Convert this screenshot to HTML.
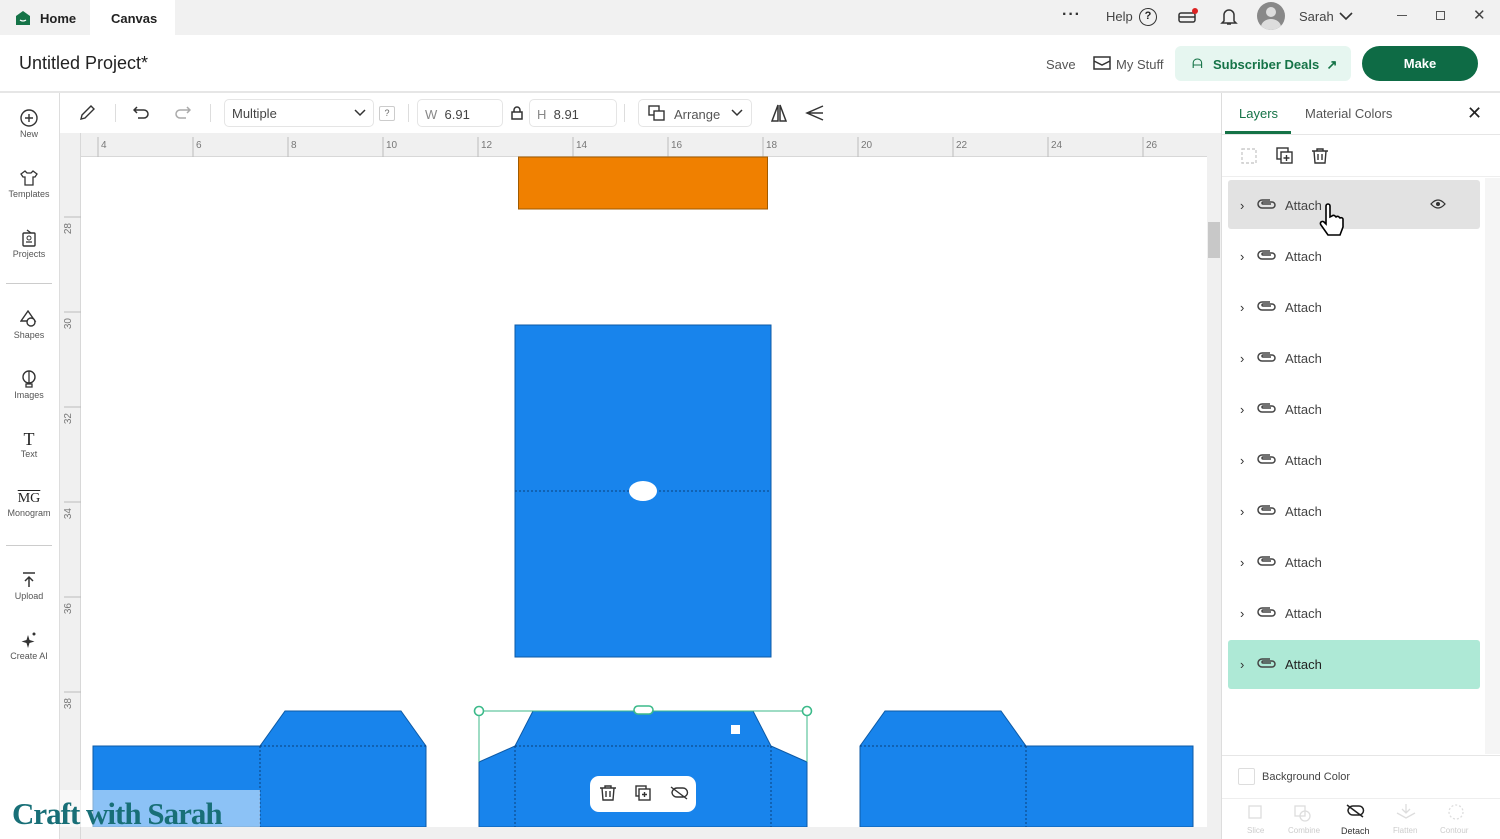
<!DOCTYPE html>
<html><head><meta charset="utf-8"><style>
*{box-sizing:border-box;margin:0;padding:0}
body{width:1500px;height:839px;overflow:hidden;font-family:"Liberation Sans",sans-serif;background:#fff;position:relative;color:#222}
.a{position:absolute}
.side div{position:absolute;left:0;width:58px;text-align:center;font-size:9px;color:#555}
.side svg{display:block;margin:0 auto 2px}
.row{position:absolute;left:1228px;width:252px;height:49px;border-radius:3px;font-size:13px;color:#444}
</style></head><body>
<!-- top bar -->
<div class="a" style="left:0;top:0;width:1500px;height:35px;background:#f1f1f1"></div>
<div class="a" style="left:90px;top:0;width:85px;height:35px;background:#fff"></div>
<svg class="a" style="left:15px;top:10px" width="16" height="16"><path d="M1 6L8 1L15 6V15H1Z" fill="#157347"/><path d="M5 10Q8 12 11 10" stroke="#fff" stroke-width="1.3" fill="none"/></svg>
<div class="a" style="left:40px;top:11px;font-size:13px;font-weight:bold;color:#222">Home</div>
<div class="a" style="left:111px;top:11px;font-size:13px;font-weight:bold;color:#222">Canvas</div>
<div class="a" style="left:1062px;top:6px;font-size:16px;letter-spacing:1px;color:#333;font-weight:bold">···</div>
<div class="a" style="left:1106px;top:9px;font-size:13px;color:#444">Help</div>
<div class="a" style="left:1139px;top:8px;width:18px;height:18px;border:1.5px solid #333;border-radius:50%;font-size:11px;text-align:center;line-height:15px;font-weight:bold">?</div>
<svg class="a" style="left:1177px;top:8px" width="22" height="18"><rect x="2" y="5" width="16" height="9" rx="2" fill="none" stroke="#333" stroke-width="1.5"/><line x1="2" y1="9" x2="18" y2="9" stroke="#333" stroke-width="1.5"/><circle cx="18" cy="3" r="3" fill="#d22"/></svg>
<svg class="a" style="left:1220px;top:7px" width="18" height="20"><path d="M4 14V8a5 5 0 0 1 10 0v6l2 2H2z M7 17h4" fill="none" stroke="#333" stroke-width="1.5"/></svg>
<div class="a" style="left:1257px;top:2px;width:28px;height:28px;border-radius:50%;background:#888;overflow:hidden"><div class="a" style="left:9px;top:5px;width:10px;height:10px;border-radius:50%;background:#ddd"></div><div class="a" style="left:4px;top:17px;width:20px;height:16px;border-radius:50%;background:#ddd"></div></div>
<div class="a" style="left:1299px;top:9px;font-size:13px;color:#444">Sarah</div>
<svg class="a" style="left:1339px;top:11px" width="14" height="10"><path d="M1 2l6 6 6-6" stroke="#333" stroke-width="1.6" fill="none"/></svg>
<div class="a" style="left:1397px;top:15px;width:10px;height:1px;background:#555"></div>
<div class="a" style="left:1436px;top:11px;width:9px;height:9px;border:1px solid #555"></div>
<div class="a" style="left:1473px;top:6px;font-size:15px;color:#444">✕</div>
<!-- header -->
<div class="a" style="left:0;top:91px;width:1500px;height:2px;background:#e6e6e6"></div>
<div class="a" style="left:19px;top:53px;font-size:18px;color:#222">Untitled Project*</div>
<div class="a" style="left:1046px;top:57px;font-size:13px;color:#555">Save</div>
<svg class="a" style="left:1093px;top:55px" width="18" height="16"><path d="M1 2h16v12H1z M1 6l8 4 8-4" fill="none" stroke="#333" stroke-width="1.5"/></svg>
<div class="a" style="left:1116px;top:57px;font-size:13px;color:#555">My Stuff</div>
<div class="a" style="left:1175px;top:46px;width:176px;height:35px;background:#e6f6f0;border-radius:6px"></div>
<div class="a" style="left:1192px;top:56px;font-size:13px;color:#157347">ᗩ</div>
<div class="a" style="left:1213px;top:57px;font-size:13px;font-weight:bold;color:#157347">Subscriber Deals &nbsp;↗</div>
<div class="a" style="left:1362px;top:46px;width:116px;height:35px;background:#0e6b45;border-radius:18px;color:#fff;font-weight:bold;font-size:13px;text-align:center;line-height:35px">Make</div>
<!-- left sidebar -->
<div class="a" style="left:59px;top:93px;width:1px;height:746px;background:#ddd"></div>
<div class="side">
<div style="top:109px"><svg width="18" height="18"><circle cx="9" cy="9" r="8" fill="none" stroke="#333" stroke-width="1.4"/><path d="M9 5v8M5 9h8" stroke="#333" stroke-width="1.4"/></svg>New</div>
<div style="top:169px"><svg width="18" height="18"><path d="M5 2L1 5l2 3h2v8h8V8h2l2-3-4-3-2 2H7z" fill="none" stroke="#333" stroke-width="1.3"/></svg>Templates</div>
<div style="top:229px"><svg width="18" height="18"><rect x="3" y="4" width="12" height="13" rx="1" fill="none" stroke="#333" stroke-width="1.4"/><circle cx="9" cy="9" r="2" fill="none" stroke="#333"/><path d="M6 13h6M7 1l4 3" stroke="#333" stroke-width="1.3"/></svg>Projects</div>
<div style="top:310px"><svg width="18" height="18"><path d="M8 1L1 11h14z" fill="none" stroke="#333" stroke-width="1.4"/><circle cx="11" cy="12" r="4" fill="#fff" stroke="#333" stroke-width="1.4"/></svg>Shapes</div>
<div style="top:370px"><svg width="18" height="18"><ellipse cx="9" cy="7" rx="6" ry="6" fill="none" stroke="#333" stroke-width="1.4"/><path d="M9 1v12M6 14h6v3H6z" fill="none" stroke="#333" stroke-width="1.3"/></svg>Images</div>
<div style="top:431px"><div style="position:static;font-family:'Liberation Serif',serif;font-size:18px;color:#222;width:58px;line-height:16px;margin-bottom:2px">T</div>Text</div>
<div style="top:490px"><div style="position:static;font-family:'Liberation Serif',serif;font-size:14px;color:#222;width:58px;line-height:18px;text-decoration:overline">MG</div>Monogram</div>
<div style="top:571px"><svg width="18" height="18"><path d="M3 2h12M9 16V6M5 10l4-4 4 4" fill="none" stroke="#333" stroke-width="1.5"/></svg>Upload</div>
<div style="top:631px"><svg width="18" height="18"><path d="M8 4l1.5 5 5 1.5-5 1.5L8 17l-1.5-5L1.5 10.5l5-1.5z" fill="#333"/><circle cx="14" cy="3" r="1.5" fill="#333"/></svg>Create AI</div>
</div>
<div class="a" style="left:6px;top:283px;width:46px;height:1px;background:#ccc"></div>
<div class="a" style="left:6px;top:545px;width:46px;height:1px;background:#ccc"></div>
<!-- toolbar -->
<svg class="a" style="left:78px;top:104px" width="18" height="18"><path d="M3 15l1-4L13 2l3 3-9 9z" fill="none" stroke="#333" stroke-width="1.4"/></svg>
<div class="a" style="left:115px;top:104px;width:1px;height:18px;background:#ddd"></div>
<svg class="a" style="left:133px;top:105px" width="18" height="16"><path d="M4 2L1 5l3 3M1 5h10a4 4 0 0 1 0 8H5" fill="none" stroke="#333" stroke-width="1.5"/></svg>
<svg class="a" style="left:173px;top:105px" width="18" height="16"><path d="M14 2l3 3-3 3M17 5H7a4 4 0 0 0 0 8h6" fill="none" stroke="#aaa" stroke-width="1.5"/></svg>
<div class="a" style="left:210px;top:104px;width:1px;height:18px;background:#ddd"></div>
<div class="a" style="left:224px;top:99px;width:150px;height:28px;border:1px solid #e5e5e5;border-radius:5px;font-size:13px;color:#444;padding:6px 7px">Multiple</div>
<svg class="a" style="left:354px;top:109px" width="12" height="8"><path d="M1 1l5 5 5-5" stroke="#333" stroke-width="1.5" fill="none"/></svg>
<div class="a" style="left:379px;top:106px;width:16px;height:15px;border:1px solid #ccc;border-radius:2px;font-size:9px;color:#666;text-align:center;line-height:13px">?</div>
<div class="a" style="left:408px;top:104px;width:1px;height:18px;background:#ddd"></div>
<div class="a" style="left:417px;top:99px;width:86px;height:28px;border:1px solid #e5e5e5;border-radius:5px;font-size:13px;color:#444;padding:7px 7px"><span style="color:#888">W</span>&nbsp;&nbsp;6.91</div>
<svg class="a" style="left:511px;top:106px" width="12" height="14"><rect x="1" y="6" width="10" height="7" fill="none" stroke="#333" stroke-width="1.5"/><path d="M3 6V4a3 3 0 0 1 6 0v2" fill="none" stroke="#333" stroke-width="1.5"/></svg>
<div class="a" style="left:529px;top:99px;width:88px;height:28px;border:1px solid #e5e5e5;border-radius:5px;font-size:13px;color:#444;padding:7px 7px"><span style="color:#888">H</span>&nbsp;&nbsp;8.91</div>
<div class="a" style="left:624px;top:104px;width:1px;height:18px;background:#ddd"></div>
<div class="a" style="left:638px;top:99px;width:114px;height:28px;border:1px solid #e5e5e5;border-radius:5px;font-size:13px;color:#555;padding:7px 0 0 35px">Arrange</div>
<svg class="a" style="left:648px;top:105px" width="18" height="16"><rect x="1" y="1" width="10" height="9" fill="none" stroke="#333" stroke-width="1.4"/><rect x="6" y="6" width="10" height="9" fill="#fff" stroke="#333" stroke-width="1.4"/></svg>
<svg class="a" style="left:731px;top:109px" width="12" height="8"><path d="M1 1l5 5 5-5" stroke="#333" stroke-width="1.5" fill="none"/></svg>
<svg class="a" style="left:770px;top:103px" width="18" height="20"><path d="M8 2L2 18h6zM10 2l6 16h-6z" fill="none" stroke="#333" stroke-width="1.5"/></svg>
<svg class="a" style="left:805px;top:104px" width="20" height="18"><path d="M18 2L2 9l16 7M18 9H2" fill="none" stroke="#333" stroke-width="1.5"/></svg>
<!-- rulers -->
<div class="a" style="left:60px;top:133px;width:1147px;height:24px;background:#f0f0f0;border-bottom:1px solid #d8d8d8"></div>
<div class="a" style="left:60px;top:133px;width:21px;height:706px;background:#f0f0f0;border-right:1px solid #d8d8d8"></div>
<svg class="a" style="left:81px;top:133px" width="1126" height="24" font-family="Liberation Sans" font-size="10" fill="#777">
<g stroke="#bbb">
<line x1="17" y1="4" x2="17" y2="24"/><line x1="112" y1="4" x2="112" y2="24"/><line x1="207" y1="4" x2="207" y2="24"/><line x1="302" y1="4" x2="302" y2="24"/><line x1="397" y1="4" x2="397" y2="24"/><line x1="492" y1="4" x2="492" y2="24"/><line x1="587" y1="4" x2="587" y2="24"/><line x1="682" y1="4" x2="682" y2="24"/><line x1="777" y1="4" x2="777" y2="24"/><line x1="872" y1="4" x2="872" y2="24"/><line x1="967" y1="4" x2="967" y2="24"/><line x1="1062" y1="4" x2="1062" y2="24"/>
</g>
<text x="20" y="15">4</text><text x="115" y="15">6</text><text x="210" y="15">8</text><text x="305" y="15">10</text><text x="400" y="15">12</text><text x="495" y="15">14</text><text x="590" y="15">16</text><text x="685" y="15">18</text><text x="780" y="15">20</text><text x="875" y="15">22</text><text x="970" y="15">24</text><text x="1065" y="15">26</text>
</svg>
<svg class="a" style="left:60px;top:157px" width="21" height="682" font-family="Liberation Sans" font-size="10" fill="#777">
<g stroke="#bbb"><line x1="4" y1="60" x2="21" y2="60"/><line x1="4" y1="155" x2="21" y2="155"/><line x1="4" y1="250" x2="21" y2="250"/><line x1="4" y1="345" x2="21" y2="345"/><line x1="4" y1="440" x2="21" y2="440"/><line x1="4" y1="535" x2="21" y2="535"/></g>
<text transform="translate(11,66) rotate(-90)" text-anchor="end">28</text><text transform="translate(11,161) rotate(-90)" text-anchor="end">30</text><text transform="translate(11,256) rotate(-90)" text-anchor="end">32</text><text transform="translate(11,351) rotate(-90)" text-anchor="end">34</text><text transform="translate(11,446) rotate(-90)" text-anchor="end">36</text><text transform="translate(11,541) rotate(-90)" text-anchor="end">38</text>
</svg>
<!-- scrollbars -->
<div class="a" style="left:1207px;top:133px;width:14px;height:694px;background:#f0f0f0"></div>
<div class="a" style="left:1208px;top:222px;width:12px;height:36px;background:#c8c8c8"></div>
<div class="a" style="left:81px;top:827px;width:1140px;height:12px;background:#f0f0f0"></div>
<div class="a" style="left:1221px;top:93px;width:1px;height:746px;background:#ddd"></div>
<!-- shapes -->
<svg class="a" style="left:0;top:0" width="1207" height="827">
<rect x="518.5" y="157" width="249" height="52" fill="#f08000" stroke="#a05a00"/>
<rect x="515" y="325" width="256" height="332" fill="#1884ec" stroke="#0d5aa6"/>
<line x1="515" y1="491" x2="771" y2="491" stroke="#0a3f7a" stroke-dasharray="2 2"/>
<ellipse cx="643" cy="491" rx="14" ry="10" fill="#fff"/>
<path d="M93 746H260L285 711H401L426 746V827H93Z" fill="#1884ec" stroke="#0d5aa6"/>
<path d="M260 746H426M260 746V827" stroke="#0a3f7a" stroke-dasharray="2 2"/>
<path d="M479 762L515 746L533 711H753L771 746L807 762V827H479Z" fill="#1884ec" stroke="#0d5aa6"/>
<path d="M515 746H771M515 746V827M771 746V827" stroke="#0a3f7a" stroke-dasharray="2 2"/>
<path d="M860 746L885 711H1001L1026 746H1193V827H860Z" fill="#1884ec" stroke="#0d5aa6"/>
<path d="M860 746H1026M1026 746V827" stroke="#0a3f7a" stroke-dasharray="2 2"/>
<path d="M479 711H807M479 711V762M807 711V762" stroke="#3cba8a" fill="none"/>
<circle cx="479" cy="711" r="4.5" fill="#fff" stroke="#3cba8a" stroke-width="1.6"/>
<circle cx="807" cy="711" r="4.5" fill="#fff" stroke="#3cba8a" stroke-width="1.6"/>
<rect x="634" y="706" width="19" height="8" rx="4" fill="#fff" stroke="#3cba8a" stroke-width="1.6"/>
<rect x="731" y="725" width="9" height="9" fill="#fff"/>
<rect x="590" y="776" width="106" height="36" rx="9" fill="#fff"/>
<g fill="none" stroke="#333" stroke-width="1.4">
<path d="M600 788h16M605 788v-2h6v2M602 788l1 12h10l1-12M606 791v6M610 791v6"/>
<rect x="636" y="786" width="10" height="10"/><rect x="639" y="789" width="11" height="11" fill="#fff"/><path d="M644.5 792v5M642 794.5h5"/>
<path d="M672 793a5 5 0 0 1 5-5h6a4 4 0 0 1 0 9h-6a5 5 0 0 1-5-4M671 787l16 12"/>
</g>
<rect x="60" y="790" width="200" height="37" fill="#fff" opacity="0.5"/>
</svg>
<div class="a" style="left:12px;top:795px;font-family:'Liberation Serif',serif;font-size:31px;font-weight:bold;color:#186f77;letter-spacing:-1px;line-height:38px">Craft with Sarah</div>
<!-- right panel -->
<div class="a" style="left:1239px;top:106px;font-size:13px;color:#157347">Layers</div>
<div class="a" style="left:1225px;top:131px;width:66px;height:3px;background:#157347"></div>
<div class="a" style="left:1305px;top:106px;font-size:13px;color:#555">Material Colors</div>
<div class="a" style="left:1467px;top:103px;font-size:18px;color:#222">✕</div>
<div class="a" style="left:1222px;top:134px;width:278px;height:1px;background:#e6e6e6"></div>
<svg class="a" style="left:1240px;top:146px" width="100" height="20" fill="none" stroke-width="1.4">
<rect x="2" y="3" width="14" height="14" stroke="#ccc" stroke-dasharray="3 2"/>
<rect x="37" y="2" width="11" height="11" stroke="#333"/><rect x="41" y="6" width="11" height="11" stroke="#333" fill="#fff"/><path d="M46.5 9v6M43.5 12h6" stroke="#333"/>
<path d="M72 5h16M77 5V3h6v2M74 5l1 12h10l1-12M78 8v6M82 8v6" stroke="#333"/>
</svg>
<div class="a" style="left:1222px;top:176px;width:278px;height:1px;background:#eee"></div>
<div class="a" style="left:1485px;top:178px;width:15px;height:576px;background:#f5f5f5"></div>
<div class="row" style="top:180px;background:#e2e2e2"></div>
<div class="row" style="top:640px;background:#aee9d6"></div>
<div class="a" style="left:1222px;top:755px;width:278px;height:1px;background:#e6e6e6"></div>
<div class="a" style="left:1238px;top:768px;width:17px;height:17px;border:1px solid #ddd;border-radius:2px"></div>
<div class="a" style="left:1262px;top:771px;font-size:11px;color:#444">Background Color</div>
<div class="a" style="left:1222px;top:798px;width:278px;height:1px;background:#eee"></div>
<div class="a" style="left:1247px;top:826px;font-size:8px;color:#ccc">Slice</div>
<div class="a" style="left:1288px;top:826px;font-size:8px;color:#ccc">Combine</div>
<div class="a" style="left:1341px;top:826px;font-size:9px;color:#333">Detach</div>
<div class="a" style="left:1393px;top:826px;font-size:8px;color:#ccc">Flatten</div>
<div class="a" style="left:1440px;top:826px;font-size:8px;color:#ccc">Contour</div>
<svg class="a" style="left:1245px;top:803px" width="230" height="20" fill="none" stroke-width="1.3">
<rect x="4" y="3" width="12" height="12" stroke="#ddd"/><rect x="50" y="3" width="10" height="10" stroke="#ddd"/><circle cx="60" cy="13" r="5" stroke="#ddd"/>
<path d="M103 8a5 5 0 0 1 5-5h6a4 4 0 0 1 0 9h-6a5 5 0 0 1-5-4M102 2l16 12" stroke="#222" stroke-width="1.5"/>
<path d="M161 1v8M157 6l4 4 4-4M152 10l9 5 9-5" stroke="#ddd"/><circle cx="211" cy="9" r="7" stroke="#ddd" stroke-dasharray="2 2"/>
</svg>
<div class="a" style="left:1240px;top:180px;font-size:13px;color:#333;line-height:51px">›<br>›<br>›<br>›<br>›<br>›<br>›<br>›<br>›<br>›</div>
<svg class="a" style="left:1257px;top:196px" width="20" height="480" fill="none" stroke="#444" stroke-width="1.5">
<g id="clip"><path d="M13 4H5a4 4 0 0 0 0 8h10a3 3 0 0 0 0-6H6a1 1 0 0 0 0 2h8"/></g>
<use href="#clip" y="51"/><use href="#clip" y="102"/><use href="#clip" y="153"/><use href="#clip" y="204"/><use href="#clip" y="255"/><use href="#clip" y="306"/><use href="#clip" y="357"/><use href="#clip" y="408"/><use href="#clip" y="459"/>
</svg>
<div class="a" style="left:1285px;top:180px;font-size:13px;color:#444;line-height:51px">Attach<br>Attach<br>Attach<br>Attach<br>Attach<br>Attach<br>Attach<br>Attach<br>Attach<br><span style="color:#222">Attach</span></div>
<svg class="a" style="left:1430px;top:198px" width="16" height="12"><path d="M1 6Q8 -2 15 6Q8 14 1 6Z" fill="none" stroke="#333" stroke-width="1.3"/><circle cx="8" cy="6" r="2" fill="#333"/></svg>
<svg class="a" style="left:1318px;top:203px" width="26" height="36"><path d="M8 3a2 2 0 0 1 4 0v11l2-1a2 2 0 0 1 3 0l1 1a2 2 0 0 1 3 0l1 1a2 2 0 0 1 3 1v8l-3 8H10l-7-10a2 2 0 0 1 3-3l2 2z" fill="#fff" stroke="#000" stroke-width="1.6"/></svg>
</body></html>
